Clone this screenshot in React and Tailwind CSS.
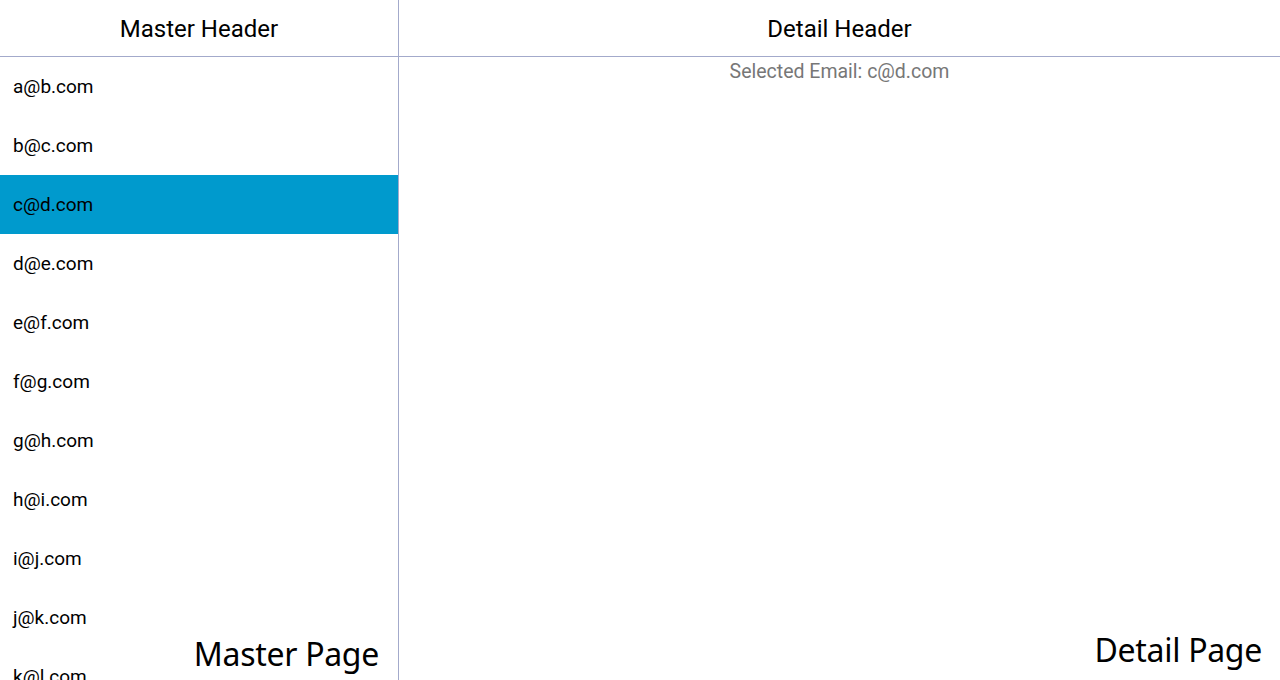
import React from "react";

const emails = ["a@b.com","b@c.com","c@d.com","d@e.com","e@f.com","f@g.com","g@h.com","h@i.com","i@j.com","j@k.com","k@l.com","l@m.com"];

export default function App() {
  return (
    <div className="flex h-[680px] w-[1280px] overflow-hidden bg-white text-black" style={{fontFamily: "Roboto, sans-serif"}}>
      <div className="relative flex w-[399px] shrink-0 flex-col border-r border-[#a3aacb]">
        <div className="flex h-[57px] shrink-0 items-center justify-center border-b border-[#a3aacb] pt-[2px] text-[24px]">Master Header</div>
        <div className="flex flex-col">
          {emails.map((e) => (
            <div key={e} className={"flex h-[59px] shrink-0 items-center pl-[13px] pt-[2px] text-[19px] " + (e === "c@d.com" ? "bg-[#009acd]" : "")}>{e}</div>
          ))}
        </div>
        <div className="absolute bottom-[10px] right-[19px] text-[32px] leading-none tracking-[-0.3px]" style={{fontFamily: "'Noto Sans', sans-serif"}}>Master Page</div>
      </div>
      <div className="relative flex flex-1 flex-col">
        <div className="flex h-[57px] shrink-0 items-center justify-center border-b border-[#a3aacb] pt-[2px] text-[24px]">Detail Header</div>
        <div className="text-center text-[19.5px] text-[#777777]">Selected Email: c@d.com</div>
        <div className="absolute bottom-[14px] right-[18px] text-[32px] leading-none tracking-[-0.3px]" style={{fontFamily: "'Noto Sans', sans-serif"}}>Detail Page</div>
      </div>
    </div>
  );
}
